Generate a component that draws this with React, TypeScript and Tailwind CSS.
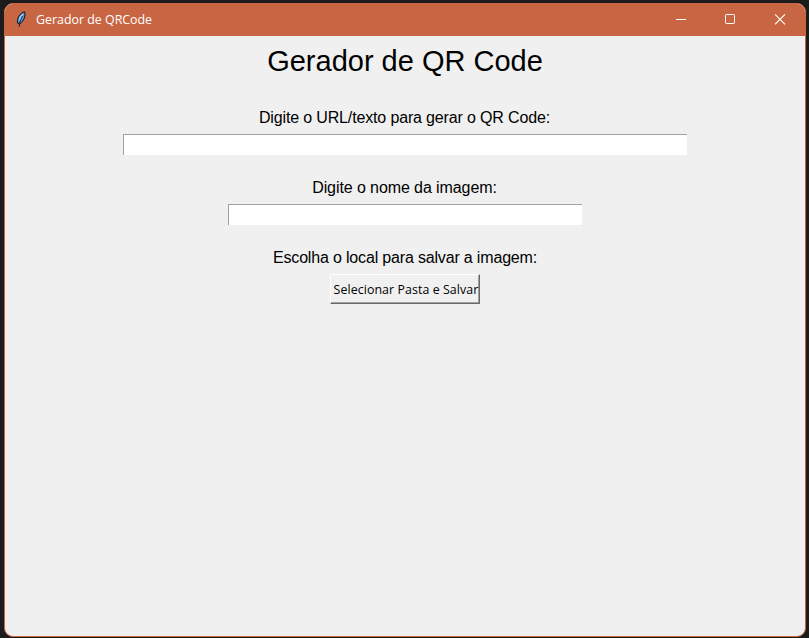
import React from "react";

function Feather() {
  return (
    <svg width="16" height="18" viewBox="0 0 16 18" className="block">
      <path d="M1.6 12 C0.8 7.6 3.4 2.4 8.6 0.8 C9.8 4.8 8 10 3.6 13 Z" fill="#4f93dc" stroke="#0b0e16" strokeWidth="1" />
      <path d="M2.6 10 C2.6 6.6 4.8 3.4 7.8 1.9 L5 7.4 Z" fill="#a9d2f7" />
      <path d="M6.4 5 C5 8 3.8 11 3.1 15.8" fill="none" stroke="#0b0e16" strokeWidth="0.8" />
    </svg>
  );
}

function TitleBar() {
  return (
    <header className="flex h-8 shrink-0 items-center bg-[#c86643] pl-[11px] text-white">
      <Feather />
      <h1 className="ml-1 flex-1 whitespace-nowrap font-['Open_Sans','Noto_Sans',sans-serif] text-[12.4px] leading-4">
        Gerador de QRCode
      </h1>
      <div className="flex h-8 items-center">
        <button aria-label="Minimizar" className="flex h-8 w-[49px] items-center justify-center">
          <svg width="11" height="11" shapeRendering="crispEdges"><path d="M0 4.5H10" stroke="white" /></svg>
        </button>
        <button aria-label="Maximizar" className="flex h-8 w-[49px] items-center justify-center pb-0.5">
          <svg width="11" height="11" fill="none"><rect x="0.5" y="0.5" width="9" height="9" rx="0.8" stroke="white" /></svg>
        </button>
        <button aria-label="Fechar" className="flex h-8 w-[50px] items-center justify-center pb-0.5">
          <svg width="11" height="11"><path d="M0 0.3L10 10.3M10 0.3L0 10.3" stroke="white" strokeWidth="1.1" /></svg>
        </button>
      </div>
    </header>
  );
}

export default function App() {
  return (
    <div className="h-[638px] w-[809px] overflow-hidden bg-[#1c1c1c] pl-1 pt-[3px]">
      <div className="flex h-[634px] w-[802px] flex-col overflow-hidden rounded-[9px] border border-[#c86643] bg-[#f0f0f0]">
        <TitleBar />
        <main className="flex flex-1 flex-col items-center font-['Liberation_Sans',Arial,sans-serif] text-black">
          <h2 className="mt-2 whitespace-nowrap text-[29px] leading-[34px]">Gerador de QR Code</h2>
          <label htmlFor="texto" className="mt-[31px] whitespace-nowrap pr-px text-[16px] leading-[18px] tracking-[-0.15px]">
            Digite o URL/texto para gerar o QR Code:
          </label>
          <input id="texto" className="mt-[7px] h-[21px] w-[564px] border-l border-t border-[#a0a0a0] bg-white outline-none" />
          <label htmlFor="nome" className="mt-6 whitespace-nowrap pr-px text-[16px] leading-[18px] tracking-[-0.09px]">
            Digite o nome da imagem:
          </label>
          <input id="nome" className="mt-[7px] h-[21px] w-[354px] border-l border-t border-[#a0a0a0] bg-white outline-none" />
          <p className="mt-6 whitespace-nowrap text-[16px] leading-[18px] tracking-[-0.17px]">
            Escolha o local para salvar a imagem:
          </p>
          <button className="mt-[7px] flex h-[30px] w-[150px] items-center justify-center whitespace-nowrap border border-b-[#696969] border-l-white border-r-[#696969] border-t-white pl-0.5 pt-0.5 font-['Open_Sans','Noto_Sans',sans-serif] text-[12.4px] leading-4 tracking-[0.07px] shadow-[inset_-1px_-1px_0_#a0a0a0]">
            Selecionar Pasta e Salvar
          </button>
        </main>
      </div>
    </div>
  );
}
